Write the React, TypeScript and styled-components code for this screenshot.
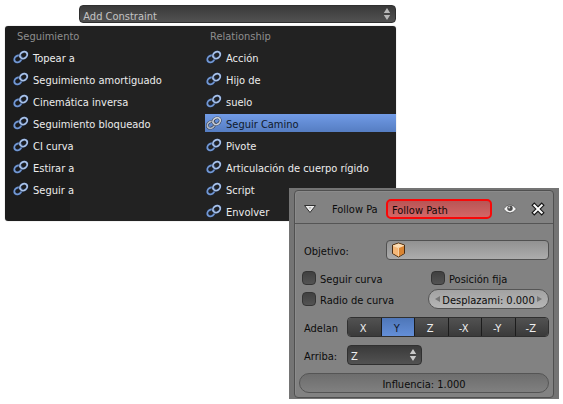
import React, { useState } from "react";
import styled, { createGlobalStyle } from "styled-components";

const GlobalStyle = createGlobalStyle`
  * { box-sizing: border-box; }
  body {
    margin: 0;
    background: #fff;
    font-family: "DejaVu Sans Condensed", "Noto Sans", sans-serif;
    font-size: 11px;
    line-height: 16px;
  }
  button, input, select { font: inherit; margin: 0; }
`;

const Page = styled.main`
  display: grid;
  grid-template-columns: minmax(0, 284fr) minmax(0, 107fr) minmax(0, 163fr);
  padding: 5px 4px 4px 5px;
`;

const ConstraintArea = styled.section`
  grid-column: 1 / 3;
  display: flex;
  flex-direction: column;
  gap: 3px;
`;

const SelectBox = styled.div`
  display: grid;
  align-items: center;
  > * { grid-area: 1 / 1; }
  > svg { justify-self: end; margin-right: 5px; pointer-events: none; }
`;

const AddBox = styled(SelectBox)`
  margin-left: 19%;
`;

const Select = styled.select<{ $tone: string }>`
  appearance: none;
  width: 100%;
  min-width: 0;
  height: ${(p) => (p.$tone === "light" ? 20 : 18)}px;
  padding: 3px 18px 0 3px;
  border: 1px solid #303030;
  border-radius: 4px;
  background: linear-gradient(#3a3a3a, #525252);
  color: ${(p) => (p.$tone === "light" ? "#f0f0f0" : "#c4c4c4")};
  outline: none;
`;

const Menu = styled.div`
  display: grid;
  grid-template-columns: minmax(0, 193fr) minmax(0, 191fr);
  padding: 0 0 1px 7px;
  border-radius: 3px;
  background: linear-gradient(90deg, #1c1c1c 65px, #222 65px);
  box-shadow: 0 0 1px #888;
`;

const MenuColumn = styled.div`
  display: flex;
  flex-direction: column;
  gap: 4px;
`;

const MenuHeading = styled.h2`
  margin: 0;
  padding: 3px 0 0 5px;
  height: 18px;
  font-size: 11px;
  font-weight: 400;
  color: #8e8e8e;
`;

const MenuItem = styled.button<{ $active: boolean }>`
  display: flex;
  align-items: center;
  gap: 4px;
  height: 18px;
  padding: 0 0 0 1px;
  border: 0;
  text-align: left;
  white-space: nowrap;
  color: ${(p) => (p.$active ? "#101a2c" : "#ececec")};
  background: ${(p) => (p.$active ? "linear-gradient(#719be6, #557dc2)" : "transparent")};
  span { padding-top: 4px; }
`;

const PanelFrame = styled.section`
  grid-column: 2 / 4;
  margin-top: -33px;
  padding: 2px 5px 1px;
  background: #747474;
  color: #0c0c0c;
`;

const Panel = styled.div`
  border: 1px solid #505050;
  border-radius: 4px;
  background: #828282;
  box-shadow: inset 1px 1px 0 #8b8b8b;
`;

const PanelHeader = styled.header`
  display: flex;
  align-items: center;
  height: 33px;
  padding: 3px 8px 0;
  border-bottom: 1px solid #555;
`;

const IconButton = styled.button`
  display: grid;
  place-items: center;
  width: 14px;
  height: 16px;
  padding: 0;
  border: 0;
  background: none;
`;

const HeaderTitle = styled.label`
  width: 54px;
  margin-left: 15px;
  padding-top: 2px;
  white-space: nowrap;
  overflow: hidden;
`;

const NameInput = styled.input`
  flex: 1;
  min-width: 0;
  height: 20px;
  padding: 3px 4px 0;
  border: 2px solid #f80808;
  border-radius: 5px;
  background: linear-gradient(#b85555, #d46666);
  color: #100808;
  outline: none;
`;

const HeaderActions = styled.div`
  display: flex;
  gap: 14px;
  margin-left: 11px;
`;

const Body = styled.div`
  display: flex;
  flex-direction: column;
  gap: 8px;
  padding: 16px 4px 4px;
`;

const Row = styled.div`
  display: flex;
  align-items: center;
  height: 20px;
`;

const Label = styled.label<{ $width: number }>`
  flex: none;
  width: ${(p) => p.$width}px;
  padding: 4px 0 0 5px;
  white-space: nowrap;
  overflow: hidden;
`;

const ObjectField = styled.div`
  display: flex;
  flex: 1;
  align-items: center;
  min-width: 0;
  height: 20px;
  padding: 0 4px;
  border: 1px solid #505050;
  border-radius: 4px;
  background: linear-gradient(#919191, #acacac);
`;

const ObjectInput = styled.input`
  flex: 1;
  min-width: 0;
  border: 0;
  padding: 0 4px;
  background: none;
  outline: none;
`;

const Options = styled.div`
  display: grid;
  grid-template-columns: minmax(0, 129fr) minmax(0, 121fr);
  row-gap: 1px;
`;

const CheckLabel = styled.label`
  display: flex;
  align-items: center;
  gap: 4px;
  height: 20px;
  padding-left: 3px;
  white-space: nowrap;
  span { padding-top: 4px; }
`;

const Checkbox = styled.input`
  appearance: none;
  flex: none;
  width: 14px;
  height: 14px;
  border: 1px solid #343434;
  border-radius: 4px;
  background: linear-gradient(#404040, #535353);
  &:checked { background: #5680c2; }
`;

const NumberField = styled.div`
  display: flex;
  align-items: center;
  height: 20px;
  padding: 0 6px;
  border: 1px solid #555;
  border-radius: 10px;
  background: linear-gradient(#a2a2a2, #b6b6b6);
`;

const NumberInput = styled.input`
  flex: 1;
  min-width: 0;
  height: 18px;
  padding: 2px 0 0;
  border: 0;
  background: none;
  color: #0c0c0c;
  text-align: center;
  outline: none;
`;

const SliderInput = styled(NumberInput)`
  height: 20px;
  border: 1px solid #555;
  border-radius: 10px;
  background: linear-gradient(#6d6d6d, #808080);
`;

const Segments = styled.div`
  display: flex;
  flex: 1;
  height: 20px;
  border: 1px solid #303030;
  border-radius: 4px;
  overflow: hidden;
`;

const Segment = styled.button<{ $active: boolean }>`
  flex: 1;
  padding: 3px 2px 0 0;
  border: 0;
  color: ${(p) => (p.$active ? "#10182a" : "#f0f0f0")};
  background: ${(p) =>
    p.$active ? "linear-gradient(#4e76b8, #648fd8)" : "linear-gradient(#525252, #3a3a3a)"};
  & + & { border-left: 1px solid #1c1c1c; }
`;

const AxisBox = styled(SelectBox)`
  width: 30%;
`;

const LinkIcon = ({ active }: { active: boolean }) => {
  const links = [
    { cx: 5, cy: 8.9, color: active ? "#aeb7c6" : "#7398d2" },
    { cx: 10.6, cy: 5.1, color: active ? "#c8ced8" : "#a9c2e8" },
  ];
  return (
    <svg width="16" height="14" viewBox="0 0 16 14" fill="none" aria-hidden="true">
      {links.map((l) => (
        <g key={l.cx} transform={`rotate(-35 ${l.cx} ${l.cy})`}>
          <ellipse cx={l.cx} cy={l.cy} rx="3.9" ry="3.1" stroke={active ? "#27303f" : "#1c2b48"} strokeWidth="2.6" />
          <ellipse cx={l.cx} cy={l.cy} rx="3.9" ry="3.1" stroke={l.color} strokeWidth="1.8" />
        </g>
      ))}
    </svg>
  );
};

const UpDownIcon = ({ color }: { color: string }) => (
  <svg width="8" height="14" viewBox="0 0 8 14" fill={color} aria-hidden="true">
    <path d="M4 1 7.2 6H.8Z M4 13 .8 8h6.4Z" />
  </svg>
);

const ExpandIcon = () => (
  <svg width="14" height="10" viewBox="0 0 14 10" aria-hidden="true">
    <path d="M1.5 1.5h11L7 8.5Z" fill="#eee" stroke="#303030" strokeWidth="1" strokeLinejoin="round" />
    <path d="M5.5 3h3L7 5.5Z" fill="#bbb" />
  </svg>
);

const EyeIcon = () => (
  <svg width="14" height="12" viewBox="0 0 14 12" aria-hidden="true">
    <path d="M.5 6Q7-2.5 13.5 6 7 14 .5 6Z" fill="#f2f2f2" stroke="#4c4c4c" strokeWidth=".8" />
    <circle cx="7" cy="5.3" r="2.7" fill="#4c4c4c" />
    <circle cx="6.2" cy="4.5" r="1" fill="#ccc" />
  </svg>
);

const CloseIcon = () => (
  <svg width="14" height="14" viewBox="0 0 14 14" fill="none" strokeLinecap="square" aria-hidden="true">
    <path d="m3.3 3.3 7.4 7.4M10.7 3.3l-7.4 7.4" stroke="#161616" strokeWidth="4.2" />
    <path d="m3.3 3.3 7.4 7.4M10.7 3.3l-7.4 7.4" stroke="#fff" strokeWidth="2" />
  </svg>
);

const CubeIcon = () => (
  <svg width="15" height="16" viewBox="0 0 15 16" aria-hidden="true">
    <path d="m7.5 1 6 2v8.500l-6 3.500-6-3.500V3Z" fill="#e79a4a" stroke="#4a2d12" strokeLinejoin="round" />
    <path d="m7.5 1.500 5.500 2-5.500 2.300L2 3.500Z" fill="#fbdcb4" />
    <path d="m2 3.500 5.500 2.300v8.600L2 11.200Z" fill="#f6b878" />
    <path d="m13 3.500-5.500 2.300v8.600l5.500-3.200Z" fill="#d98432" />
    <path d="M2 3.500 7.500 5.800 13 3.500M7.500 5.800v8.500" stroke="#ffe9cc" strokeWidth=".7" fill="none" />
  </svg>
);

const StepIcon = ({ back }: { back?: boolean }) => (
  <svg width="5" height="8" viewBox="0 0 5 8" fill="#777" aria-hidden="true">
    <path d={back ? "M5 1v6L0 4Z" : "M0 1v6l5-3Z"} />
  </svg>
);

const groups = [
  {
    title: "Seguimiento",
    items: ["Topear a", "Seguimiento amortiguado", "Cinemática inversa", "Seguimiento bloqueado", "CI curva", "Estirar a", "Seguir a"],
  },
  {
    title: "Relationship",
    items: ["Acción", "Hijo de", "suelo", "Seguir Camino", "Pivote", "Articulación de cuerpo rígido", "Script", "Envolver"],
  },
];

const axes = ["X", "Y", "Z", "-X", "-Y", "-Z"];

export default function App() {
  const [chosen, setChosen] = useState("Seguir Camino");
  const [forward, setForward] = useState("Y");

  return (
    <>
      <GlobalStyle />
      <Page>
        <ConstraintArea>
          <AddBox>
            <Select $tone="dim" aria-label="Add Constraint">
              <option>Add Constraint</option>
            </Select>
            <UpDownIcon color="#b8b8b8" />
          </AddBox>
          <Menu>
            {groups.map((group) => (
              <MenuColumn key={group.title}>
                <MenuHeading>{group.title}</MenuHeading>
                {group.items.map((item) => (
                  <MenuItem key={item} $active={item === chosen} onClick={() => setChosen(item)}>
                    <LinkIcon active={item === chosen} />
                    <span>{item}</span>
                  </MenuItem>
                ))}
              </MenuColumn>
            ))}
          </Menu>
        </ConstraintArea>

        <PanelFrame>
          <Panel>
            <PanelHeader>
              <IconButton aria-label="Expand"><ExpandIcon /></IconButton>
              <HeaderTitle htmlFor="name">Follow Pa</HeaderTitle>
              <NameInput id="name" defaultValue="Follow Path" />
              <HeaderActions>
                <IconButton aria-label="Visible"><EyeIcon /></IconButton>
                <IconButton aria-label="Remove"><CloseIcon /></IconButton>
              </HeaderActions>
            </PanelHeader>
            <Body>
              <Row>
                <Label htmlFor="target" $width={87}>Objetivo:</Label>
                <ObjectField>
                  <CubeIcon />
                  <ObjectInput id="target" />
                </ObjectField>
              </Row>
              <Options>
                <CheckLabel><Checkbox type="checkbox" /><span>Seguir curva</span></CheckLabel>
                <CheckLabel><Checkbox type="checkbox" /><span>Posición fija</span></CheckLabel>
                <CheckLabel><Checkbox type="checkbox" /><span>Radio de curva</span></CheckLabel>
                <NumberField>
                  <StepIcon back />
                  <NumberInput aria-label="Desplazamiento" defaultValue="Desplazami: 0.000" />
                  <StepIcon />
                </NumberField>
              </Options>
              <Row>
                <Label as="span" $width={48}>Adelan</Label>
                <Segments role="group" aria-label="Adelante">
                  {axes.map((axis) => (
                    <Segment key={axis} $active={axis === forward} aria-pressed={axis === forward} onClick={() => setForward(axis)}>
                      {axis}
                    </Segment>
                  ))}
                </Segments>
              </Row>
              <Row>
                <Label htmlFor="up" $width={48}>Arriba:</Label>
                <AxisBox>
                  <Select id="up" $tone="light" defaultValue="Z">
                    <option>X</option>
                    <option>Y</option>
                    <option>Z</option>
                  </Select>
                  <UpDownIcon color="#c8c8c8" />
                </AxisBox>
              </Row>
              <Row>
                <SliderInput aria-label="Influencia" defaultValue="Influencia: 1.000" />
              </Row>
            </Body>
          </Panel>
        </PanelFrame>
      </Page>
    </>
  );
}
